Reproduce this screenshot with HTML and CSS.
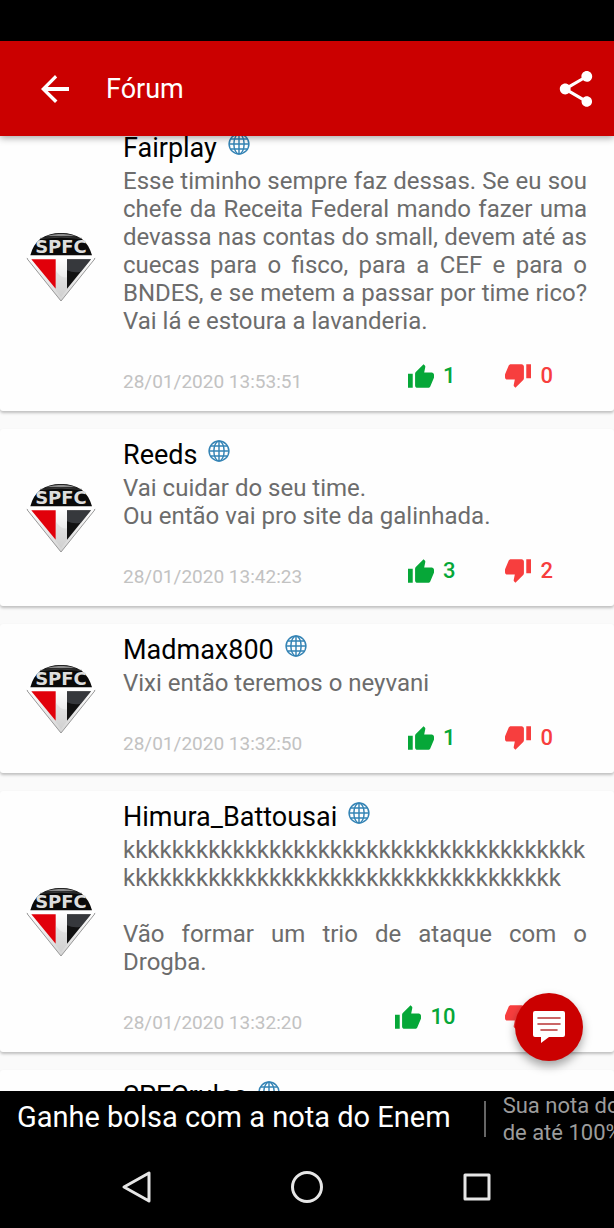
FILE: index.html
```
<!DOCTYPE html>
<html lang="pt-BR">
  <head>
    <meta charset="UTF-8" />
    <meta name="viewport" content="width=device-width, initial-scale=1.0" />
    <title>Fórum</title>
    <link rel="stylesheet" href="styles.css">
  </head>
  <body>
    <!-- shared icons -->
    <svg class="sprite" aria-hidden="true">
      <symbol id="globe" viewBox="0 0 24 24">
        <g fill="none" stroke="#3584b5" stroke-width="1.6">
          <circle cx="12" cy="12" r="10.8" />
          <ellipse cx="12" cy="12" rx="5.6" ry="10.8" />
          <path d="M12 1v22M1 12h22M3 6.5h18M3 17.5h18" />
        </g>
      </symbol>
      <symbol id="thumb-up" viewBox="1 1 22 20">
        <path d="M1 21h4V9H1v12zm22-11c0-1.1-.9-2-2-2h-6.31l.95-4.57.03-.32c0-.41-.17-.79-.44-1.06L14.17 1 7.59 7.59C7.22 7.95 7 8.45 7 9v10c0 1.1.9 2 2 2h9c.83 0 1.54-.5 1.84-1.22l3.02-7.05c.09-.23.14-.47.14-.73v-2z" />
      </symbol>
      <symbol id="thumb-down" viewBox="1 3 22 20">
        <path d="M15 3H6c-.83 0-1.54.5-1.84 1.22l-3.02 7.05c-.09.23-.14.47-.14.73v2c0 1.1.9 2 2 2h6.31l-.95 4.57-.03.32c0 .41.17.79.44 1.06L9.83 23l6.59-6.59c.36-.36.58-.86.58-1.41V5c0-1.1-.9-2-2-2zm4 0v12h4V3h-4z" />
      </symbol>
      <symbol id="crest" viewBox="34 36 210 210">
        <linearGradient id="metal" x1="0" y1="0" x2="0" y2="1">
          <stop offset="0" stop-color="#fff" />
          <stop offset="1" stop-color="#d4d4d4" />
        </linearGradient>
        <path d="M38 110Q58 38 139 38Q220 38 240 110V116L139 243L38 116Z" fill="#fff" />
        <path d="M38 112H240V117L139 243L38 117Z" fill="url(#metal)" stroke="#999" stroke-width="3" />
        <path d="M36 107H242V114H36Z" fill="#fff" />
        <path d="M47 106Q64 39 139 39Q214 39 232 106Z" fill="#0a0a0a" />
        <path d="M92 49Q139 34 186 49Z" fill="#8c8c8c" />
        <path d="M76 55Q139 48 202 55" fill="none" stroke="#555" stroke-width="2" />
        <text x="139" y="99" text-anchor="middle" class="crest-text">SPFC</text>
        <path d="M50 118H123V206Z" fill="#e1000a" />
        <path d="M157 118H229L157 206Z" fill="#111" />
        <path d="M157 118H229L199 155Q177 160 157 151Z" fill="#50545a" opacity=".6" />
        <path d="M123 151Q139 177 157 172V208L139 231L123 210Z" fill="#bbb" opacity=".25" />
      </symbol>
    </svg>

    <div class="status-bar"></div>

    <header class="app-bar">
      <button class="icon-btn" aria-label="Voltar">
        <svg width="28" height="28" viewBox="4 4 16 16"><path d="M20 10.8H7.83l5.39-5.39L12 4l-8 8 8 8 1.41-1.41L7.83 13.2H20z" /></svg>
      </button>
      <h1>Fórum</h1>
      <button class="icon-btn" aria-label="Compartilhar">
        <svg width="34" height="36" viewBox="3 2 18 20"><path d="M18 16.08c-.76 0-1.44.3-1.96.77L8.91 12.7c.05-.23.09-.46.09-.7s-.04-.47-.09-.7l7.05-4.11c.54.5 1.25.81 2.04.81 1.66 0 3-1.34 3-3s-1.34-3-3-3-3 1.34-3 3c0 .24.04.47.09.7L8.04 9.81C7.5 9.31 6.79 9 6 9c-1.66 0-3 1.34-3 3s1.34 3 3 3c.79 0 1.5-.31 2.04-.81l7.12 4.16c-.05.21-.08.43-.08.65 0 1.61 1.31 2.92 2.92 2.92 1.61 0 2.92-1.31 2.92-2.92s-1.31-2.92-2.92-2.92z" /></svg>
      </button>
    </header>

    <main class="forum">
      <div class="posts">
        <article class="card">
          <svg class="crest"><use href="#crest" /></svg>
          <div class="content">
            <h2>Fairplay <svg class="globe"><use href="#globe" /></svg></h2>
            <p>Esse timinho sempre faz dessas. Se eu sou chefe da Receita Federal mando fazer uma devassa nas contas do small, devem até as cuecas para o fisco, para a CEF e para o BNDES, e se metem a passar por time rico? Vai lá e estoura a lavanderia.</p>
            <footer>
              <time>28/01/2020 13:53:51</time>
              <button class="vote up"><svg><use href="#thumb-up" /></svg>1</button>
              <button class="vote down"><svg><use href="#thumb-down" /></svg>0</button>
            </footer>
          </div>
        </article>

        <article class="card">
          <svg class="crest"><use href="#crest" /></svg>
          <div class="content">
            <h2>Reeds <svg class="globe"><use href="#globe" /></svg></h2>
            <p>Vai cuidar do seu time.<br>Ou então vai pro site da galinhada.</p>
            <footer>
              <time>28/01/2020 13:42:23</time>
              <button class="vote up"><svg><use href="#thumb-up" /></svg>3</button>
              <button class="vote down"><svg><use href="#thumb-down" /></svg>2</button>
            </footer>
          </div>
        </article>

        <article class="card">
          <svg class="crest"><use href="#crest" /></svg>
          <div class="content">
            <h2>Madmax800 <svg class="globe"><use href="#globe" /></svg></h2>
            <p>Vixi então teremos o neyvani</p>
            <footer>
              <time>28/01/2020 13:32:50</time>
              <button class="vote up"><svg><use href="#thumb-up" /></svg>1</button>
              <button class="vote down"><svg><use href="#thumb-down" /></svg>0</button>
            </footer>
          </div>
        </article>

        <article class="card">
          <svg class="crest"><use href="#crest" /></svg>
          <div class="content">
            <h2>Himura_Battousai <svg class="globe"><use href="#globe" /></svg></h2>
            <p>kkkkkkkkkkkkkkkkkkkkkkkkkkkkkkkkkkkkkkkkkkkkkkkkkkkkkkkkkkkkkkkkkkkkkkkkkk<br><br>Vão formar um trio de ataque com o Drogba.</p>
            <footer>
              <time>28/01/2020 13:32:20</time>
              <button class="vote up"><svg><use href="#thumb-up" /></svg>10</button>
              <button class="vote down"><svg><use href="#thumb-down" /></svg>0</button>
            </footer>
          </div>
        </article>

        <article class="card">
          <div class="content">
            <h2>SPFCrules <svg class="globe"><use href="#globe" /></svg></h2>
          </div>
        </article>
      </div>

      <button class="fab" aria-label="Comentar">
        <svg width="34" height="34" viewBox="0 0 34 34">
          <path d="M3 1H31Q33 1 33 3V25Q33 27 31 27H17L9 33V27H3Q1 27 1 25V3Q1 1 3 1Z" fill="#fff" />
          <path d="M6 8H28M6 14H28M9 20H25" stroke="#b93434" stroke-width="1.6" stroke-linecap="round" />
        </svg>
      </button>
    </main>

    <a class="ad" href="#">
      <span class="ad-title">Ganhe bolsa com a nota do Enem</span>
      <span class="ad-text">Sua nota do<br>de até 100%</span>
    </a>

    <nav class="nav-bar">
      <button aria-label="Voltar"><svg width="34" height="34" viewBox="0 0 34 34"><path d="M29 3V31L4 17Z" /></svg></button>
      <button aria-label="Início"><svg width="34" height="34" viewBox="0 0 34 34"><circle cx="17" cy="17" r="14.5" /></svg></button>
      <button aria-label="Recentes"><svg width="34" height="34" viewBox="0 0 34 34"><path d="M5 5H29V29H5Z" /></svg></button>
    </nav>
  </body>
</html>
```
FILE: styles.css
```
* {
  box-sizing: border-box;
}
body {
  margin: 0;
  height: 100vh;
  display: flex;
  flex-direction: column;
  font-family: Roboto, "Liberation Sans", sans-serif;
  background: #000;
  overflow: hidden;
}
button {
  background: none;
  border: none;
  padding: 0;
  font-family: inherit;
  cursor: pointer;
}
svg {
  display: block;
}
.sprite {
  position: absolute;
  width: 0;
  height: 0;
}

/* top */
.status-bar {
  flex: none;
  height: 41px;
}
.app-bar {
  flex: none;
  display: flex;
  align-items: center;
  height: 95px;
  padding: 0 21px 0 41px;
  background: #cb0000;
  color: #fff;
  position: relative;
  z-index: 2;
  box-shadow: 0 2px 7px rgba(0, 0, 0, 0.35);
}
.app-bar h1 {
  flex: 1;
  margin: 0 0 0 37px;
  font-size: 27px;
  font-weight: 400;
}
.icon-btn {
  fill: #fff;
}

/* posts */
.forum {
  flex: 1;
  min-height: 0;
  position: relative;
  overflow: hidden;
  background: #fafafa;
}
.posts {
  display: flex;
  flex-direction: column;
  gap: 18px;
  margin-top: -14px;
}
.card {
  display: flex;
  align-items: center;
  background: #fefefe;
  border-radius: 3px;
  box-shadow: 0 2px 3px rgba(0, 0, 0, 0.24);
}
.crest {
  flex: none;
  width: 70px;
  height: 70px;
  margin: 0 27px 0 26px;
}
.crest-text {
  font-family: "DejaVu Sans", sans-serif;
  font-size: 54px;
  font-weight: bold;
  fill: #ddd;
}
.content {
  flex: 1;
  min-width: 0;
  padding: 10px 27px 23px 0;
}
.content:only-child {
  margin-left: 123px;
}
.card h2 {
  display: flex;
  gap: 11px;
  margin: 0 0 3px;
  font-size: 27px;
  font-weight: 400;
  line-height: 32px;
  color: #000;
}
.globe {
  width: 22px;
  height: 22px;
  margin-top: 1px;
}
.card p {
  margin: 0;
  font-size: 24px;
  line-height: 28px;
  color: #6c6c6c;
  text-align: justify;
  overflow-wrap: break-word;
}
.card footer {
  display: flex;
  align-items: center;
  height: 24px;
  margin-top: 29px;
  padding-right: 34px;
}
time {
  flex: 1;
  padding-top: 10px;
  font-size: 19px;
  color: #c2c2c2;
}
.vote {
  display: flex;
  align-items: center;
  gap: 9px;
  font-size: 22px;
  font-weight: 500;
  line-height: 24px;
}
.vote svg {
  width: 26px;
  height: 24px;
  fill: currentColor;
}
.up {
  color: #06a738;
}
.down {
  margin-left: 50px;
  color: #f73e3e;
}
.fab {
  position: absolute;
  right: 31px;
  bottom: 30px;
  display: flex;
  align-items: center;
  justify-content: center;
  width: 68px;
  height: 68px;
  border-radius: 50%;
  background: #cb0000;
  box-shadow: 0 5px 10px rgba(0, 0, 0, 0.35);
}

/* bottom */
.ad {
  flex: none;
  display: flex;
  align-items: center;
  height: 55px;
  padding-left: 17px;
  color: #fff;
  text-decoration: none;
  white-space: nowrap;
  overflow: hidden;
}
.ad-title {
  font-size: 29px;
}
.ad-title::after {
  content: "";
  display: inline-block;
  width: 2px;
  height: 36px;
  margin: 0 17px 0 33px;
  background: #666;
  vertical-align: middle;
}
.ad-text {
  font-size: 22px;
  line-height: 27px;
  color: #9c9c9c;
}
.nav-bar {
  flex: none;
  display: flex;
  align-items: center;
  justify-content: center;
  gap: 136px;
  height: 82px;
}
.nav-bar svg {
  fill: none;
  stroke: #e6e6e6;
  stroke-width: 3;
  stroke-linejoin: round;
}
```
